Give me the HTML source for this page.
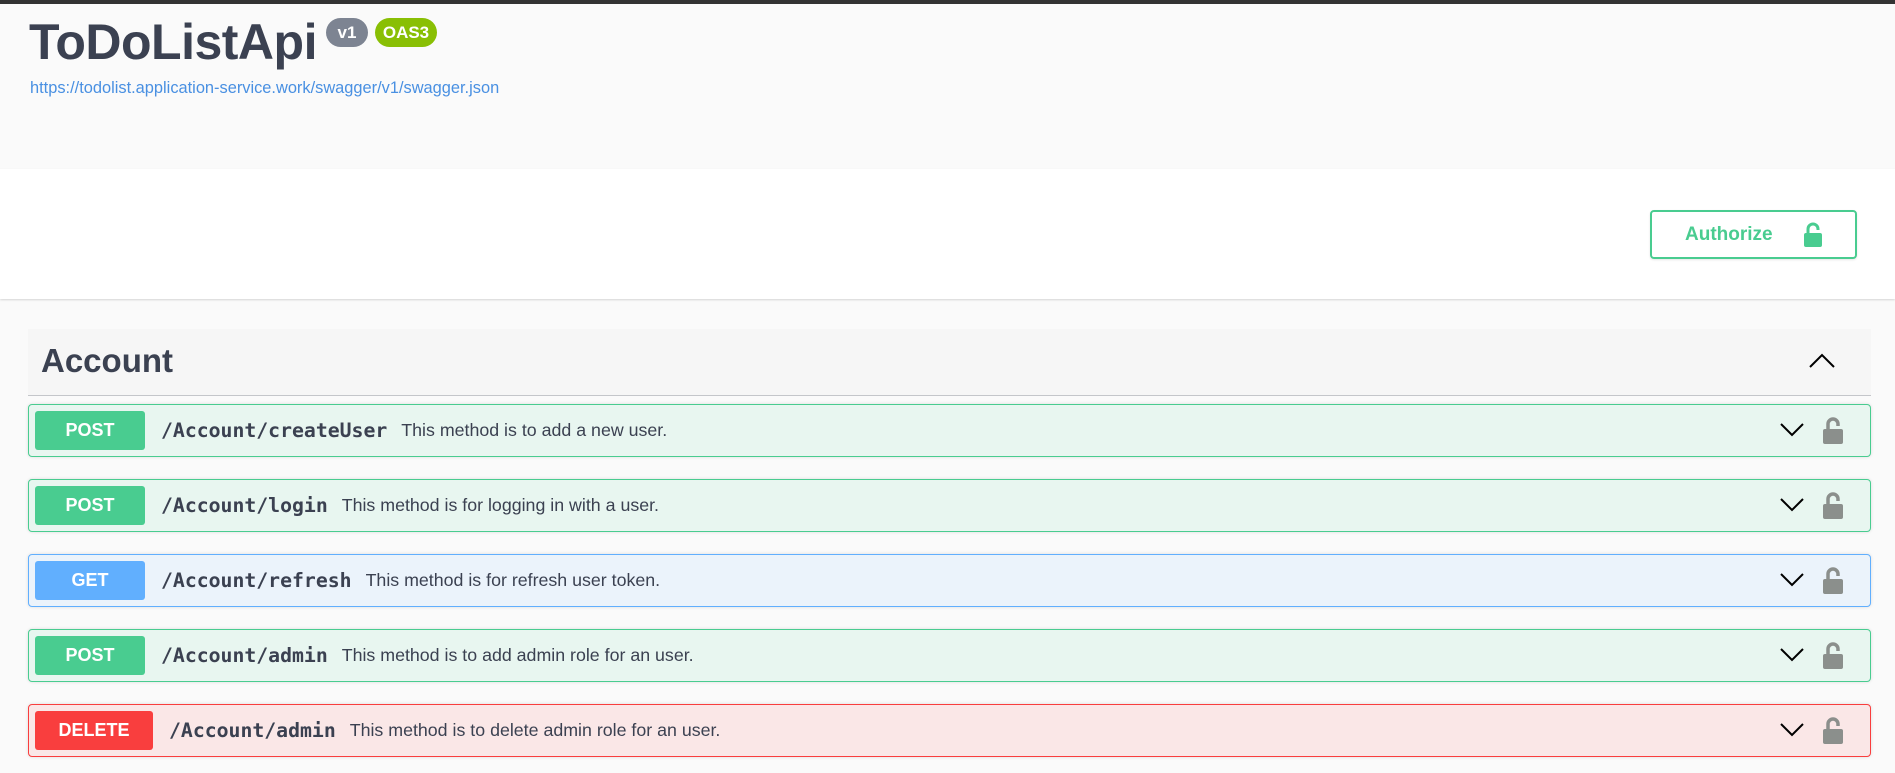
<!DOCTYPE html>
<html><head><meta charset="utf-8"><style>
*{box-sizing:border-box;margin:0;padding:0}
body{width:1895px;height:773px;overflow:hidden;background:#fafafa;font-family:"Liberation Sans",Arial,sans-serif;color:#3b4151;position:relative}
.topbar{position:absolute;left:0;top:0;width:1895px;height:4px;background:#333}
.title{position:absolute;left:29px;top:13px;font-size:50px;font-weight:bold;color:#3b4151;letter-spacing:-0.5px}
.badge{position:absolute;top:18px;height:29px;border-radius:15px;color:#fff;font-weight:bold;font-size:17px;line-height:29px;text-align:center}
.url{position:absolute;left:30px;top:79px;font-size:16.4px;color:#4990e2}
.scheme{position:absolute;left:0;top:169px;width:1895px;height:130px;background:#fff;box-shadow:0 1px 2px rgba(0,0,0,.15)}
.auth{position:absolute;left:1650px;top:210px;width:207px;height:49px;border:2px solid #49cc90;border-radius:4px;color:#49cc90;font-weight:bold;font-size:19px;line-height:45px;box-shadow:0 1px 2px rgba(0,0,0,.1)}
.tag{position:absolute;left:28px;top:329px;width:1843px;height:67px;background:#f6f6f6;border-bottom:1px solid #c4c6ca}
.tag h3{position:absolute;left:13px;top:13px;font-size:33px;font-weight:bold}
.op{position:absolute;left:28px;width:1843px;height:53px;border:1px solid;border-radius:4px;box-shadow:0 0 3px rgba(0,0,0,.12)}
.m{position:absolute;left:6px;top:6px;height:39px;width:110px;border-radius:3px;color:#fff;font-weight:bold;font-size:18px;line-height:39px;text-align:center}
.row{position:absolute;left:132px;top:0;height:51px;display:flex;align-items:center;white-space:nowrap}
.p{font-family:"DejaVu Sans Mono","Liberation Mono",monospace;font-weight:bold;font-size:19.8px;color:#3b4151}
.d{font-size:17.8px;margin-left:14px;color:#3b4151}
.chev{position:absolute;right:66px;top:16px}
.lk{position:absolute;right:26px;top:11px}
</style></head><body>
<div class="topbar"></div>
<div class="title">ToDoListApi</div>
<div class="badge" style="left:326px;width:42px;background:#7d8492">v1</div>
<div class="badge" style="left:375px;width:62px;background:#89bf04">OAS3</div>
<div class="url">https://todolist.application-service.work/swagger/v1/swagger.json</div>
<div class="scheme"></div>
<div class="auth"><span style="position:absolute;left:33px">Authorize</span>
<svg style="position:absolute;left:151px;top:10px" width="20" height="26" viewBox="0 0 20 26"><path d="M5 11V7a5 5 0 0 1 10 0v1" fill="none" stroke="#49cc90" stroke-width="3"/><rect x="1" y="11" width="18" height="14" rx="2" fill="#49cc90"/></svg></div>
<div class="tag"><h3>Account</h3>
<svg style="position:absolute;left:1781px;top:24px" width="26" height="16" viewBox="0 0 26 16"><path d="M1 14L13 2l12 12" fill="none" stroke="#000" stroke-width="2"/></svg></div>

<div class="op" style="top:404px;background:#e8f6f0;border-color:#49cc90"><div class="m" style="background:#49cc90">POST</div><div class="row"><span class="p">/Account/createUser</span><span class="d">This method is to add a new user.</span></div>
<svg class="chev" width="24" height="16" viewBox="0 0 24 16"><path d="M1 3l11 11L23 3" fill="none" stroke="#000" stroke-width="2"/></svg>
<svg class="lk" width="22" height="29" viewBox="0 0 22 29"><path d="M6 13V8a5 5 0 0 1 10 0v2" fill="none" stroke="#8b8f8c" stroke-width="3.5"/><rect x="1" y="13" width="20" height="15" rx="2" fill="#8b8f8c"/></svg></div>

<div class="op" style="top:479px;background:#e8f6f0;border-color:#49cc90"><div class="m" style="background:#49cc90">POST</div><div class="row"><span class="p">/Account/login</span><span class="d">This method is for logging in with a user.</span></div>
<svg class="chev" width="24" height="16" viewBox="0 0 24 16"><path d="M1 3l11 11L23 3" fill="none" stroke="#000" stroke-width="2"/></svg>
<svg class="lk" width="22" height="29" viewBox="0 0 22 29"><path d="M6 13V8a5 5 0 0 1 10 0v2" fill="none" stroke="#8b8f8c" stroke-width="3.5"/><rect x="1" y="13" width="20" height="15" rx="2" fill="#8b8f8c"/></svg></div>

<div class="op" style="top:554px;background:#ebf3fb;border-color:#61affe"><div class="m" style="background:#61affe">GET</div><div class="row"><span class="p">/Account/refresh</span><span class="d">This method is for refresh user token.</span></div>
<svg class="chev" width="24" height="16" viewBox="0 0 24 16"><path d="M1 3l11 11L23 3" fill="none" stroke="#000" stroke-width="2"/></svg>
<svg class="lk" width="22" height="29" viewBox="0 0 22 29"><path d="M6 13V8a5 5 0 0 1 10 0v2" fill="none" stroke="#8b8f8c" stroke-width="3.5"/><rect x="1" y="13" width="20" height="15" rx="2" fill="#8b8f8c"/></svg></div>

<div class="op" style="top:629px;background:#e8f6f0;border-color:#49cc90"><div class="m" style="background:#49cc90">POST</div><div class="row"><span class="p">/Account/admin</span><span class="d">This method is to add admin role for an user.</span></div>
<svg class="chev" width="24" height="16" viewBox="0 0 24 16"><path d="M1 3l11 11L23 3" fill="none" stroke="#000" stroke-width="2"/></svg>
<svg class="lk" width="22" height="29" viewBox="0 0 22 29"><path d="M6 13V8a5 5 0 0 1 10 0v2" fill="none" stroke="#8b8f8c" stroke-width="3.5"/><rect x="1" y="13" width="20" height="15" rx="2" fill="#8b8f8c"/></svg></div>

<div class="op" style="top:704px;background:#fae7e7;border-color:#f93e3e"><div class="m" style="background:#f93e3e;width:118px">DELETE</div><div class="row" style="left:140px"><span class="p">/Account/admin</span><span class="d">This method is to delete admin role for an user.</span></div>
<svg class="chev" width="24" height="16" viewBox="0 0 24 16"><path d="M1 3l11 11L23 3" fill="none" stroke="#000" stroke-width="2"/></svg>
<svg class="lk" width="22" height="29" viewBox="0 0 22 29"><path d="M6 13V8a5 5 0 0 1 10 0v2" fill="none" stroke="#8b8f8c" stroke-width="3.5"/><rect x="1" y="13" width="20" height="15" rx="2" fill="#8b8f8c"/></svg></div>
</body></html>
